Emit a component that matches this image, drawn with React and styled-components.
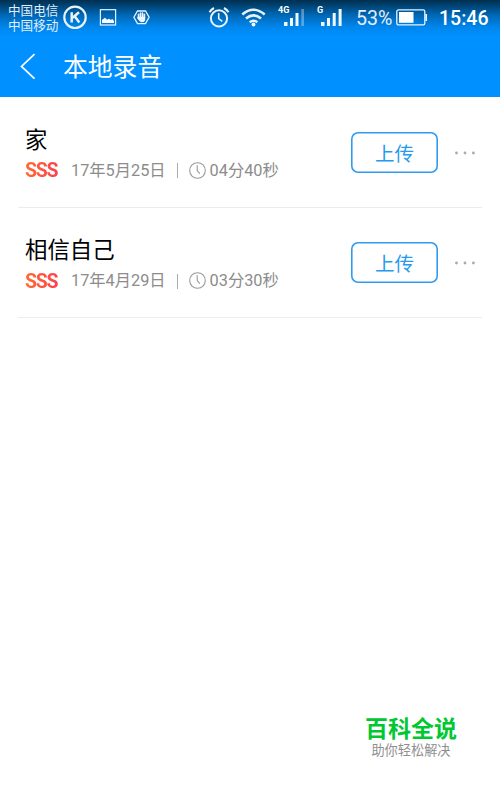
import React from "react";
import styled, { createGlobalStyle } from "styled-components";

const GlobalStyle = createGlobalStyle`
  * { box-sizing: border-box; }
  body { margin: 0; background: #fff; }
`;

const Screen = styled.div`
  display: flex;
  flex-direction: column;
  width: 500px;
  height: 789px;
  overflow: hidden;
  background: #fff;
  font-family: Roboto, "Noto Sans CJK SC", sans-serif;
`;

const Header = styled.header`
  flex: none;
  height: 97px;
  color: #fff;
  background: linear-gradient(#00304f 0, #003d68 4px, #0067b5 15px, #0086ec 27px, #0090ff 36px);
`;

const StatusBar = styled.div`
  display: flex;
  align-items: flex-start;
  height: 36px;
  padding-left: 8px;
`;

const Carriers = styled.div`
  flex: none;
  width: 51px;
  padding-top: 4px;
  font-size: 12.6px;
  line-height: 14.5px;
  white-space: nowrap;
  color: #e2eefa;
`;

const StatusIcon = styled.svg`
  flex: none;
  display: block;
  margin: ${(p) => p.$top}px 0 0 ${(p) => p.$gap}px;
  fill: none;
  stroke: #e6f2fd;
`;

const Signal = styled.div`
  flex: none;
  display: flex;
  width: ${(p) => p.$width}px;
  margin: 5px 0 0 ${(p) => p.$gap}px;
`;

const Network = styled.span`
  width: ${(p) => p.$width}px;
  font-size: 9px;
  line-height: 10px;
  font-weight: 700;
`;

const Bars = styled.svg`
  flex: none;
  margin-top: 4px;
  fill: #f0f7ff;
`;

const Percent = styled.span`
  flex: none;
  width: 37px;
  margin: 6px 0 0 12px;
  font-size: 19.6px;
  line-height: 25px;
  color: #e2eefa;
`;

const Time = styled.span`
  margin: 6px 0 0 11px;
  font-size: 19.5px;
  line-height: 25px;
  font-weight: 500;
  white-space: nowrap;
`;

const NavBar = styled.div`
  display: flex;
  align-items: center;
  height: 61px;
  padding-left: 20px;
`;

const BackIcon = styled.svg`
  fill: none;
  stroke: #fff;
  stroke-width: 1.7;
`;

const Title = styled.h1`
  margin: 2px 0 0 27px;
  font-size: 24.8px;
  line-height: 36px;
  font-weight: 400;
`;

const List = styled.main`
  flex: 1;
  padding: 0 18px;
`;

const Row = styled.section`
  display: flex;
  align-items: center;
  height: ${(p) => p.$height}px;
  padding: 0 5px 0 7px;
  border-bottom: 1px solid #ececec;
`;

const Info = styled.div`
  flex: 1;
  padding-top: 3px;
`;

const Song = styled.h2`
  margin: 0;
  font-size: 22.4px;
  line-height: 34px;
  font-weight: 400;
  color: #000;
`;

const Meta = styled.div`
  display: flex;
  align-items: center;
  height: 28px;
  font-size: 16.3px;
  line-height: 28px;
  white-space: nowrap;
  color: #8c8c8c;
`;

const Grade = styled.span`
  width: 34px;
  margin-right: 12px;
  padding-top: 1px;
  font-size: 19.4px;
  font-weight: 700;
  letter-spacing: -1.2px;
  color: transparent;
  background: linear-gradient(90deg, #ff6b30, #ff3d4d);
  background-clip: text;
`;

const Divider = styled.i`
  width: 1px;
  height: 15px;
  margin: 0 11px;
  background: #aaa;
`;

const Clock = styled.svg`
  margin-right: 4px;
  fill: none;
  stroke: #999;
  stroke-width: 1.1;
`;

const Upload = styled.button`
  width: 87px;
  height: 41px;
  padding: 0;
  border: 0;
  border-radius: 7px;
  background: #fff;
  box-shadow: inset 0 0 0 1.6px #309bee;
  color: #259aef;
  font: 400 19.5px/41px "Noto Sans CJK SC", sans-serif;
`;

const More = styled.svg`
  margin: 1px 1px 0 16px;
  fill: #aaa;
`;

const Brand = styled.footer`
  display: flex;
  flex-direction: column;
  align-items: center;
  align-self: flex-end;
  width: 92px;
  height: 76px;
  margin-right: 43px;
  white-space: nowrap;
`;

const BrandName = styled.strong`
  font-size: 23px;
  line-height: 34px;
  font-weight: 700;
  color: #00c832;
`;

const Slogan = styled.span`
  font-size: 13.2px;
  line-height: 18px;
  margin-top: -5px;
  color: #8f8f8f;
`;

const recordings = [
  { name: "家", date: "17年5月25日", length: "04分40秒", height: 111 },
  { name: "相信自己", date: "17年4月29日", length: "03分30秒", height: 110 },
];

function Recording({ item }) {
  return (
    <Row $height={item.height}>
      <Info>
        <Song>{item.name}</Song>
        <Meta>
          <Grade>SSS</Grade>
          <span>{item.date}</span>
          <Divider />
          <Clock width="17" height="18" viewBox="0 0 17 18">
            <circle cx="8.5" cy="8.5" r="7.8" />
            <path d="M8.2 3.3v5.2l2.6 3.2" />
          </Clock>
          <span>{item.length}</span>
        </Meta>
      </Info>
      <Upload>上传</Upload>
      <More width="22" height="4" viewBox="0 0 22 4">
        <circle cx="2.5" cy="2" r="1.4" />
        <circle cx="11" cy="2" r="1.4" />
        <circle cx="19.4" cy="2" r="1.4" />
      </More>
    </Row>
  );
}

export default function App() {
  return (
    <Screen>
      <GlobalStyle />
      <Header>
        <StatusBar>
          <Carriers>
            <div>中国电信</div>
            <div>中国移动</div>
          </Carriers>
          <StatusIcon $top={5} $gap={4} width="24" height="25" viewBox="0 0 24 25">
            <circle cx="12" cy="12.3" r="10.7" strokeWidth="2.2" />
            <path d="M8.7 7.2v10.2M16 7.2l-6.3 5.6M11.7 11.3l4.6 6.1" strokeWidth="2.5" />
          </StatusIcon>
          <StatusIcon $top={9} $gap={12} width="18" height="17" viewBox="0 0 18 17">
            <rect x="1.4" y=".7" width="15.2" height="15.3" strokeWidth="1.2" />
            <path d="M3 14v-3l3-2.2 2 2 2-1 2 1.2 1.2-1L15 12v2z" fill="#fff" stroke="none" />
          </StatusIcon>
          <StatusIcon $top={9} $gap={16} width="17" height="17" viewBox="0 0 17 17">
            <path d="M4.5 2h8l3.6 6.3-3.6 6.3h-8L.9 8.3z" strokeWidth="1.3" />
            <path d="M5.5 8.8V5.2M7.5 8.5V4M9.5 8.5V4M11.4 9V5.2" strokeWidth="1.6" strokeLinecap="round" />
            <path d="M4.7 7.8h7.5v2.5q0 3-3.2 3-2 0-3-1.7l-2-2.6z" fill="#eef6ff" stroke="none" />
          </StatusIcon>
          <StatusIcon $top={6} $gap={58} width="22" height="23" viewBox="0 0 22 23">
            <circle cx="11" cy="12.4" r="8.1" strokeWidth="2" />
            <path d="M1.5 6.3Q3 3.5 6 2M20.5 6.3Q19 3.5 16 2" strokeWidth="2" />
            <path d="M10.7 7v5.7l3.6 2.6" strokeWidth="1.6" />
          </StatusIcon>
          <StatusIcon $top={8} $gap={11} width="25" height="20" viewBox="0 0 25 20">
            <path d="M1.3 6.5Q12.5-3 23.7 6.5" strokeWidth="2.6" />
            <path d="M5 10.5q7.5-6.2 15 0" strokeWidth="2.6" />
            <path d="M8.7 14.3q3.8-3 7.6 0" strokeWidth="2.5" />
            <circle cx="12.5" cy="16.5" r="1.9" fill="#fff" stroke="none" />
          </StatusIcon>
          <Signal $gap={12} $width={28}>
            <Network $width={6}>4G</Network>
            <Bars width="20" height="18" viewBox="0 0 20 18">
              <rect x="0" y="13" width="3.5" height="4" />
              <rect x="6" y="9" width="3" height="8" />
              <rect x="11.5" y="4" width="3" height="13" />
              <rect x="17.3" y="0" width="2.7" height="17" opacity=".35" />
            </Bars>
          </Signal>
          <Signal $gap={11} $width={27}>
            <Network $width={4}>G</Network>
            <Bars width="21" height="18" viewBox="0 0 21 18">
              <rect x="0" y="13" width="3.5" height="4" />
              <rect x="6" y="9" width="3" height="8" />
              <rect x="11.7" y="4" width="3" height="13" />
              <rect x="17.6" y="0" width="3" height="17" />
            </Bars>
          </Signal>
          <Percent>53%</Percent>
          <StatusIcon $top={9} $gap={3} width="32" height="18" viewBox="0 0 32 18">
            <rect x=".8" y=".9" width="28" height="15" rx="1.6" strokeWidth="1.3" />
            <rect x="3" y="3" width="14.5" height="10.8" fill="#fff" stroke="none" />
            <path d="M30.2 5v7" strokeWidth="1.7" />
          </StatusIcon>
          <Time>15:46</Time>
        </StatusBar>
        <NavBar>
          <BackIcon width="16" height="28" viewBox="0 0 16 28">
            <path d="M14.5 1.2 1.5 13.400l13 12.200" />
          </BackIcon>
          <Title>本地录音</Title>
        </NavBar>
      </Header>
      <List>
        {recordings.map((item) => (
          <Recording key={item.name} item={item} />
        ))}
      </List>
      <Brand>
        <BrandName>百科全说</BrandName>
        <Slogan>助你轻松解决</Slogan>
      </Brand>
    </Screen>
  );
}
